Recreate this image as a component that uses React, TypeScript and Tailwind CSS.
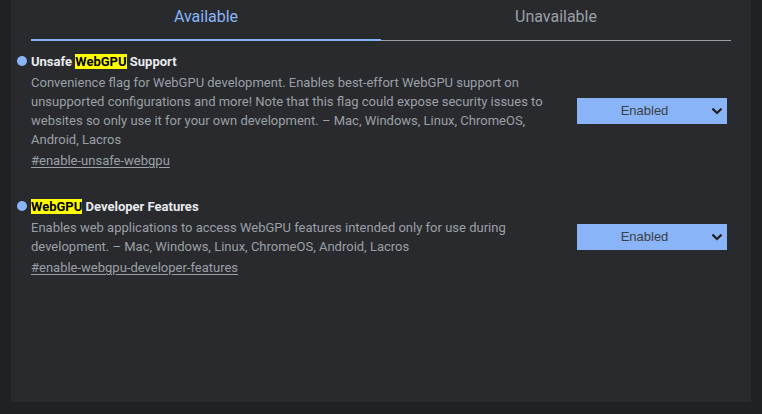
import React from "react";

const font = { fontFamily: "Roboto, 'Noto Sans', sans-serif" };

function Chevron() {
  return (
    <svg width="10" height="7" viewBox="0 0 10 7" className="shrink-0">
      <path d="M1.2 1.3 L5 5 L8.8 1.3" fill="none" stroke="#202124" strokeWidth="2.2" strokeLinecap="square" />
    </svg>
  );
}

function Select() {
  return (
    <div className="w-[150px] h-[26px] bg-[#8ab4f8] flex items-center pr-[5px] shrink-0">
      <span
        className="flex-1 text-center text-[13px] text-[#3c4043] leading-[16px]"
        style={{ fontFamily: "'Liberation Sans', Arial, sans-serif" }}
      >
        Enabled
      </span>
      <Chevron />
    </div>
  );
}

function Mark({ children }: { children: React.ReactNode }) {
  return <span className="bg-[#ffff00] text-black">{children}</span>;
}

function Flag({
  title,
  desc,
  link,
}: {
  title: React.ReactNode;
  desc: string;
  link: string;
}) {
  return (
    <div className="flex items-center">
      <div className="flex">
        <div className="w-[10px] h-[10px] rounded-full bg-[#8ab4f8] mt-[4px] ml-[-1px] mr-[4px] shrink-0" />
        <div className="w-[520px]">
          <div className="text-[13px] font-bold text-[#e8eaed] leading-[20px]">{title}</div>
          <div className="text-[13px] text-[#9aa0a6] leading-[19px] mt-[1px]">{desc}</div>
          <div className="text-[13px] text-[#9aa0a6] leading-[19px] mt-[2px] underline underline-offset-2">
            {link}
          </div>
        </div>
      </div>
      <div className="flex-1" />
      <Select />
    </div>
  );
}

export default function App() {
  return (
    <div className="w-[762px] h-[414px] bg-[#202124] pl-[11px] pr-[11px]" style={font}>
      <div className="h-[402px] bg-[#292a2d] flex flex-col">
        <div className="flex mx-[20px]">
          <div className="flex-1 h-[41px] border-b-2 border-[#8ab4f8] text-center text-[16px] leading-[20px] pt-[7px] text-[#8ab4f8]">
            Available
          </div>
          <div className="flex-1 h-[41px] border-b border-[#9aa0a6] text-center text-[16px] leading-[20px] pt-[7px] text-[#9aa0a6]">
            Unavailable
          </div>
        </div>
        <div className="pl-[7px] pr-[24px] pt-[11px] flex flex-col gap-[27px]">
          <Flag
            title={
              <>
                Unsafe <Mark>WebGPU</Mark> Support
              </>
            }
            desc="Convenience flag for WebGPU development. Enables best-effort WebGPU support on unsupported configurations and more! Note that this flag could expose security issues to websites so only use it for your own development. – Mac, Windows, Linux, ChromeOS, Android, Lacros"
            link="#enable-unsafe-webgpu"
          />
          <Flag
            title={
              <>
                <Mark>WebGPU</Mark> Developer Features
              </>
            }
            desc="Enables web applications to access WebGPU features intended only for use during development. – Mac, Windows, Linux, ChromeOS, Android, Lacros"
            link="#enable-webgpu-developer-features"
          />
        </div>
      </div>
    </div>
  );
}
